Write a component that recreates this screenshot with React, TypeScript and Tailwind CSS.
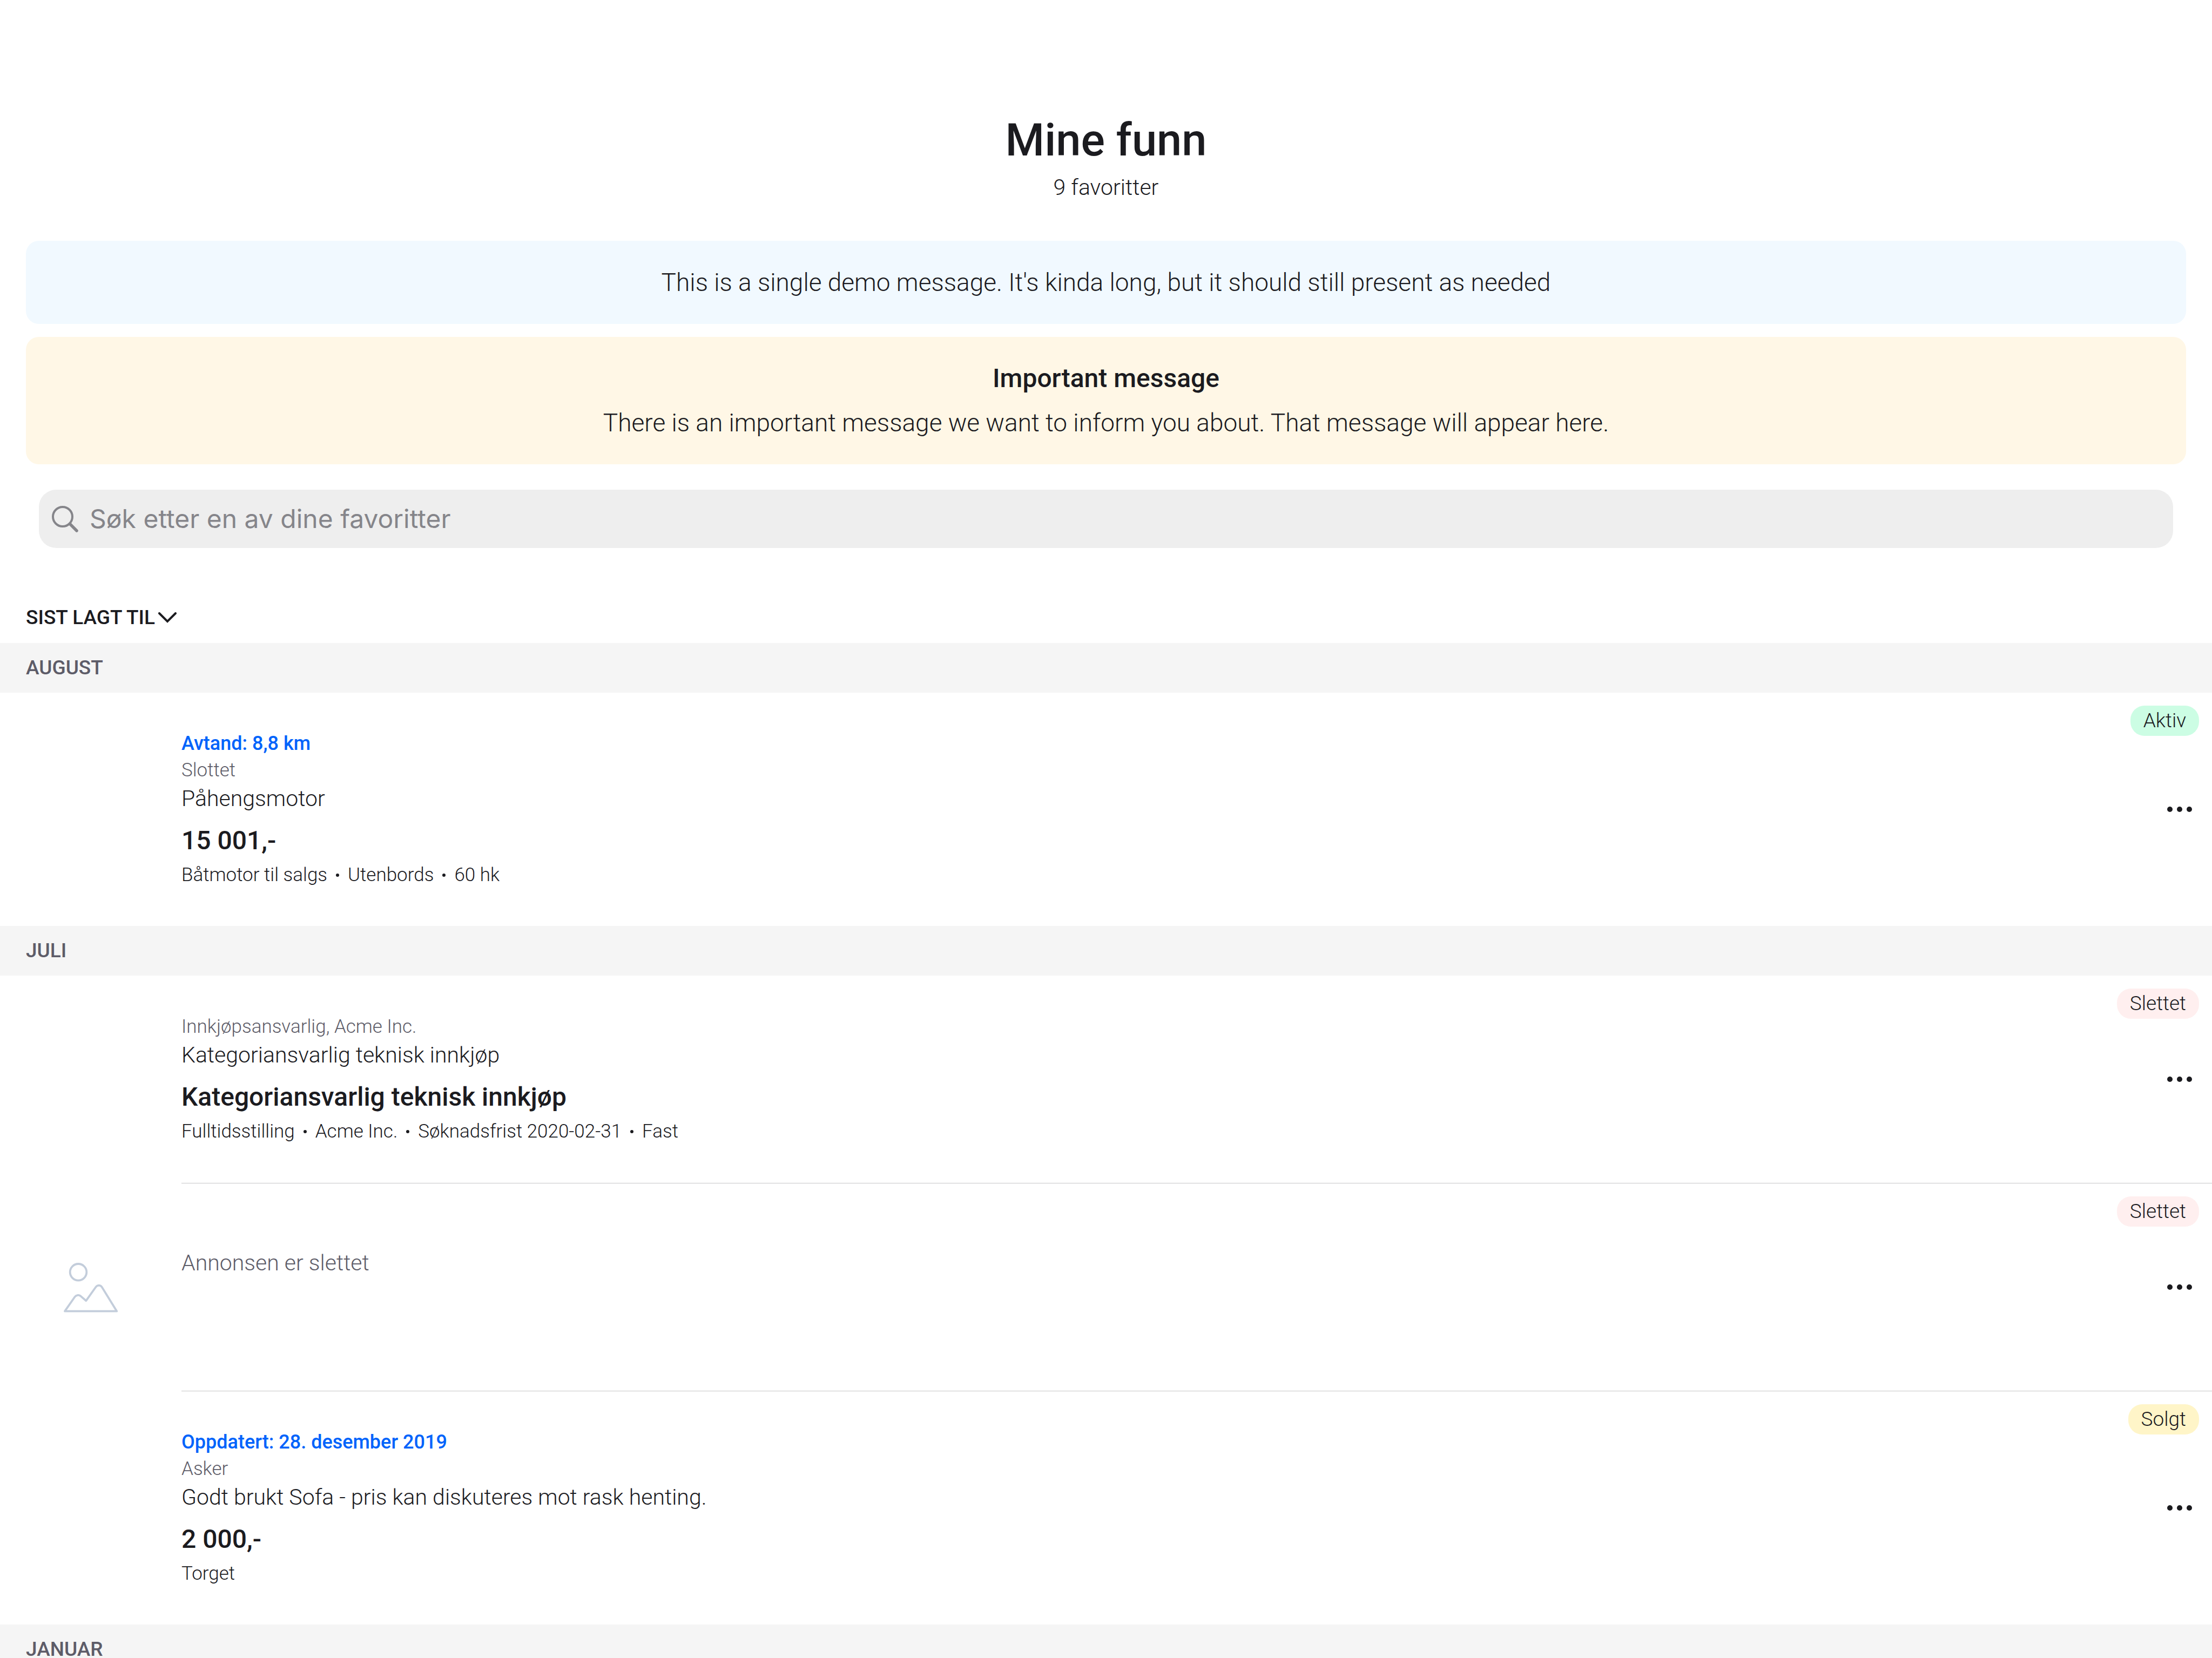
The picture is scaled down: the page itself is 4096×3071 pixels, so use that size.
type Item = {
  ribbon?: string;
  detail?: string;
  title?: string;
  headline?: string;
  facts?: string;
  removed?: boolean;
  status: "Aktiv" | "Slettet" | "Solgt";
};

type Section = { month: string; items: Item[] };

const sections: Section[] = [
  {
    month: "AUGUST",
    items: [
      {
        ribbon: "Avtand: 8,8 km",
        detail: "Slottet",
        title: "Påhengsmotor",
        headline: "15 001,-",
        facts: "Båtmotor til salgs・Utenbords・60 hk",
        status: "Aktiv",
      },
    ],
  },
  {
    month: "JULI",
    items: [
      {
        detail: "Innkjøpsansvarlig, Acme Inc.",
        title: "Kategoriansvarlig teknisk innkjøp",
        headline: "Kategoriansvarlig teknisk innkjøp",
        facts: "Fulltidsstilling・Acme Inc.・Søknadsfrist 2020-02-31・Fast",
        status: "Slettet",
      },
      { removed: true, status: "Slettet" },
      {
        ribbon: "Oppdatert: 28. desember 2019",
        detail: "Asker",
        title: "Godt brukt Sofa - pris kan diskuteres mot rask henting.",
        headline: "2 000,-",
        facts: "Torget",
        status: "Solgt",
      },
    ],
  },
  { month: "JANUAR", items: [] },
];

const statusColors = {
  Aktiv: "bg-[#ccfde4]",
  Slettet: "bg-[#ffefef]",
  Solgt: "bg-[#fff5c8]",
};

function SearchIcon() {
  return (
    <svg width="49" height="49" viewBox="0 0 49 49" fill="none" stroke="#85858a" aria-hidden="true">
      <circle cx="20" cy="20" r="18" strokeWidth="4" />
      <path d="M33.3 33.3L46 46" strokeWidth="5.5" strokeLinecap="round" />
    </svg>
  );
}

function ChevronIcon() {
  return (
    <svg width="34" height="20" viewBox="0 0 34 20" fill="none" stroke="#1b1b1f" strokeWidth="4" aria-hidden="true">
      <path d="M2 2L17 17L32 2" strokeLinecap="round" strokeLinejoin="miter" />
    </svg>
  );
}

function PlaceholderIcon() {
  return (
    <svg
      width="100"
      height="92"
      viewBox="0 0 100 92"
      fill="none"
      stroke="#c3cddb"
      strokeWidth="3.8"
      strokeLinecap="round"
      strokeLinejoin="round"
      aria-hidden="true"
    >
      <circle cx="27" cy="17.3" r="15.3" />
      <path d="M2 89.7L20.6 63C23 59.6 27.6 59 31 61.4L41.3 70.3L59.3 45C62.4 40.8 68 40.8 70.7 45L98.3 89.7Z" />
    </svg>
  );
}

function MoreIcon() {
  return (
    <svg width="46" height="10" viewBox="0 0 46 10" fill="#1b1b1f" aria-hidden="true">
      <circle cx="5" cy="5" r="5" />
      <circle cx="23" cy="5" r="5" />
      <circle cx="41" cy="5" r="5" />
    </svg>
  );
}

function Facts({ text }: { text: string }) {
  const parts = text.split("・");
  return (
    <p className="mt-[14px] flex items-center text-[35px] leading-[42px]">
      {parts.map((part, i) => (
        <span key={part} className="flex items-center">
          {i > 0 && <span className="mx-4 size-[6px] rounded-full bg-[#1b1b1f]" />}
          {part}
        </span>
      ))}
    </p>
  );
}

function FavoriteRow({ item, last }: { item: Item; last: boolean }) {
  return (
    <li className="relative flex">
      <div className="flex w-[336px] shrink-0 items-center justify-center">
        {item.removed && <PlaceholderIcon />}
      </div>
      <div className={`flex min-h-[385px] min-w-0 grow items-center ${last ? "" : "border-b border-[#c6c6c8]"}`}>
        {item.removed ? (
          <div className="grow self-start pt-[122px]">
            <p className="text-[41px] leading-[50px] text-[#5d5c68]">Annonsen er slettet</p>
          </div>
        ) : (
          <div className="grow py-[73px]">
            {item.ribbon && (
              <p className="mb-2 text-[36px] leading-[42px] font-medium text-[#0063fb]">{item.ribbon}</p>
            )}
            <p className="text-[35px] leading-[42px] text-[#5d5c68]">{item.detail}</p>
            <h3 className="mt-[6px] text-[41px] leading-[50px]">{item.title}</h3>
            <p className="mt-6 text-[48px] leading-[58px] font-medium">{item.headline}</p>
            <Facts text={item.facts ?? ""} />
          </div>
        )}
        <button type="button" aria-label="Flere valg" className="flex h-[120px] w-[120px] items-center justify-center">
          <MoreIcon />
        </button>
      </div>
      <span
        className={`absolute top-6 right-6 rounded-[26px] px-6 text-[37px] leading-[56px] ${statusColors[item.status]}`}
      >
        {item.status}
      </span>
    </li>
  );
}

export default function App() {
  return (
    <main className="h-screen overflow-hidden bg-white font-['Roboto',sans-serif] font-light text-[#1b1b1f]">
      <header className="pt-[210px] text-center">
        <h1 className="text-[83px] leading-[100px] font-medium">Mine funn</h1>
        <p className="mt-3 text-[41px] leading-[50px]">9 favoritter</p>
      </header>

      <div className="mx-12 mt-[74px] flex flex-col gap-6 text-center">
        <section className="rounded-3xl bg-[#f1f9ff] p-12 text-[46px] leading-[58px]">
          <p>This is a single demo message. It's kinda long, but it should still present as needed</p>
        </section>
        <section className="rounded-3xl bg-[#fff7e6] p-12 text-[46px] leading-[58px]">
          <h2 className="mb-6 text-[48px] font-medium">Important message</h2>
          <p>There is an important message we want to inform you about. That message will appear here.</p>
        </section>
      </div>

      <label className="mx-[72px] mt-[47px] flex h-[108px] items-center rounded-[32px] bg-[#eeeeee] px-6">
        <SearchIcon />
        <input
          type="search"
          aria-label="Søk etter en av dine favoritter"
          placeholder="Søk etter en av dine favoritter"
          className="ml-[21px] grow bg-transparent font-['Inter',sans-serif] text-[48px] font-normal outline-none placeholder:text-[#85858a]"
        />
      </label>

      <button
        type="button"
        className="mt-[108px] mb-[26px] ml-12 flex items-center gap-[6px] text-[37px] leading-[42px] font-medium"
      >
        SIST LAGT TIL
        <ChevronIcon />
      </button>

      {sections.map((section) => (
        <section key={section.month}>
          <h2 className="bg-[#f5f5f5] py-[25px] pl-12 text-[37px] leading-[42px] font-medium text-[#5d5c68]">
            {section.month}
          </h2>
          <ul>
            {section.items.map((item, i) => (
              <FavoriteRow key={i} item={item} last={i === section.items.length - 1} />
            ))}
          </ul>
        </section>
      ))}
    </main>
  );
}
